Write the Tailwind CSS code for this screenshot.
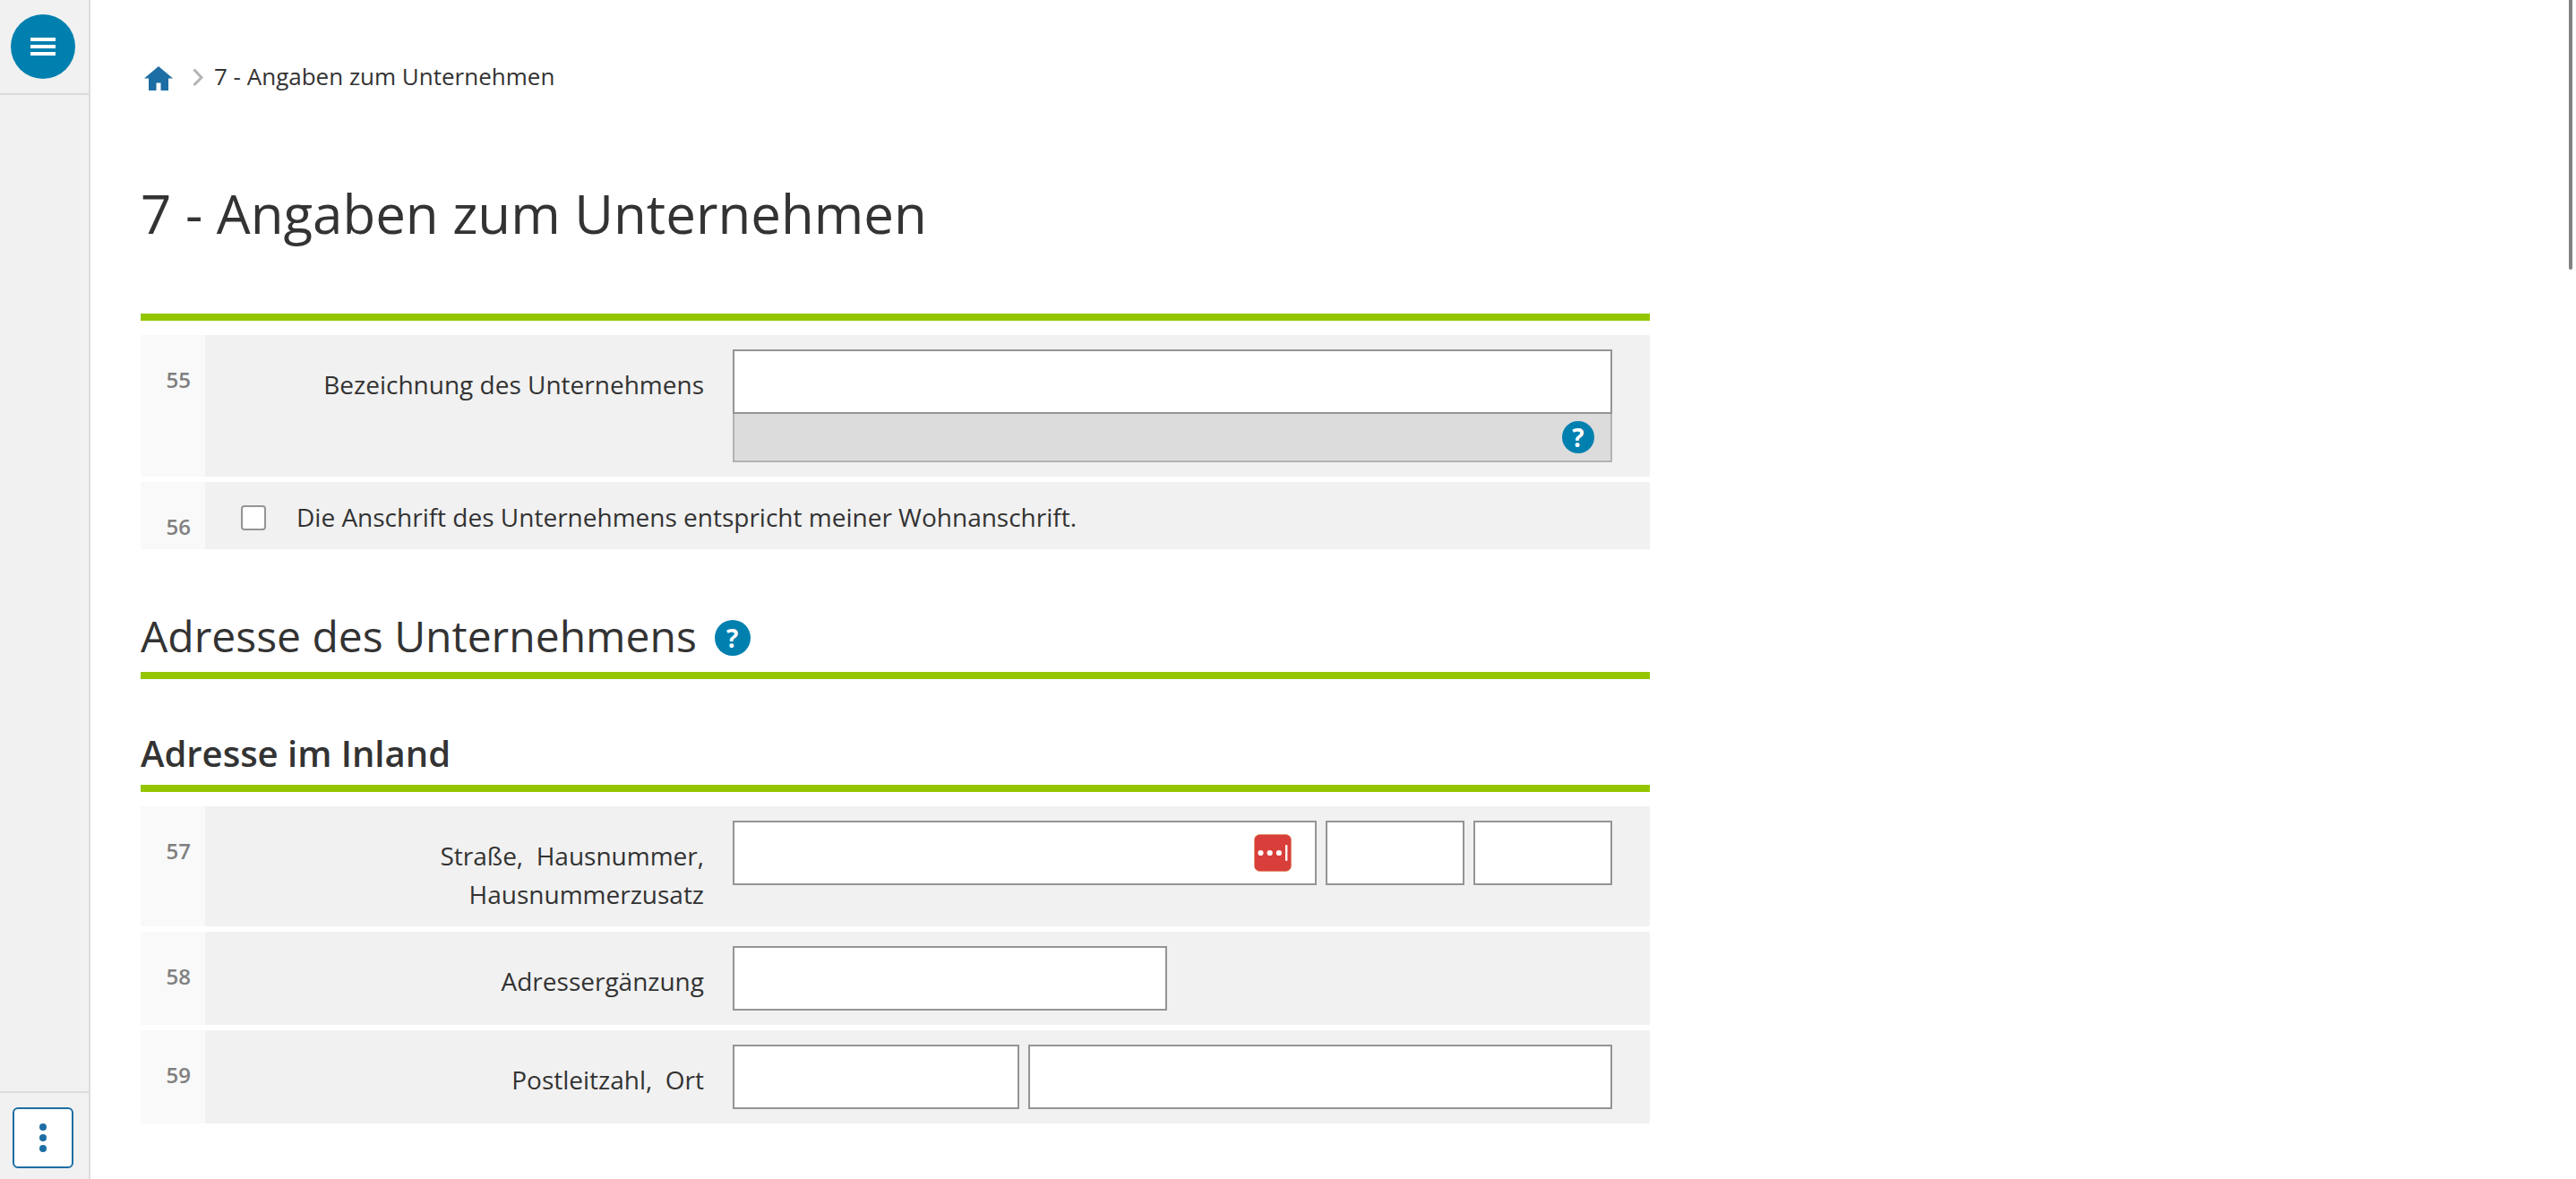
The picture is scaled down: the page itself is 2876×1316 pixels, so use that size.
<!DOCTYPE html>
<html lang="de">
<head>
  <meta charset="UTF-8" />
  <meta name="viewport" content="width=device-width, initial-scale=1.0" />
  <title>7 - Angaben zum Unternehmen</title>
  <script src="https://cdn.jsdelivr.net/npm/@tailwindcss/browser@4"></script>
</head>
<body class="flex min-h-screen bg-white font-['Open_Sans',sans-serif] text-[28px] leading-[43px] text-[#333]">

  <!-- Sidebar -->
  <aside class="flex w-[101px] shrink-0 flex-col justify-between border-r-2 border-[#dcdcdc] bg-[#f1f1f1]">
    <div class="border-b-2 border-[#dcdcdc] pt-4 pb-4 pl-3">
      <button type="button" aria-label="Menü" class="flex size-[72px] items-center justify-center rounded-full bg-[#0080af]">
        <svg class="h-5 w-7" viewBox="0 0 28 20" fill="#fff"><path d="M0 0h28v4H0zM0 8h28v4H0zM0 16h28v4H0z" /></svg>
      </button>
    </div>
    <div class="border-t-2 border-[#dcdcdc] pt-4 pb-3 pl-3.5">
      <button type="button" aria-label="Weitere Aktionen" class="flex size-[68px] items-center justify-center rounded-md border-2 border-[#1c6ea4] bg-white">
        <svg class="h-8 w-2" viewBox="0 0 8 32" fill="#1c6ea4"><circle cx="4" cy="4" r="4" /><circle cx="4" cy="16" r="4" /><circle cx="4" cy="28" r="4" /></svg>
      </button>
    </div>
  </aside>

  <!-- Main -->
  <main class="min-w-0 flex-1 px-14 pt-16">
    <div class="max-w-[1685px]">

      <nav aria-label="Breadcrumb" class="flex h-11 items-start text-[26px]">
        <a href="#" aria-label="Startseite" class="mt-2.5 ml-1">
          <svg class="h-7 w-8" viewBox="0 0 32 28" fill="#1c6ea4"><path d="M16 0 32 13.500H27V27H18.500V18.500H13.500V27H5V13.500H0z" /></svg>
        </a>
        <svg class="mt-3 ml-[22px] h-5 w-3" viewBox="0 0 12 20" fill="none" stroke="#b3b3b3" stroke-width="3"><path d="M1.500 1.500 10 10.500 1.500 19" /></svg>
        <span class="ml-3">7 - Angaben zum Unternehmen</span>
      </nav>

      <h1 class="mt-[88px] border-b-8 border-[#94c600] pb-[70px] text-[60px] leading-[84px]">7 - Angaben zum Unternehmen</h1>

      <form>
        <div class="mt-4 flex flex-col gap-1.5">
          <!-- 55 -->
          <div class="flex bg-[#f1f1f1]">
            <div class="w-[72px] shrink-0 bg-[#f9f9f9] pt-7 pr-4 text-right text-2xl leading-[43px] font-semibold text-[#808080]">55</div>
            <label for="bezeichnung" class="flex-1 pt-[34px] pr-8 pb-3.5 text-right">Bezeichnung des Unternehmens</label>
            <div class="mr-[42px] w-[982px] py-4">
              <input id="bezeichnung" type="text" class="block h-[72px] w-full border-2 border-[#949494] bg-white px-4" />
              <div class="flex h-[54px] items-center justify-end border-2 border-t-0 border-[#b3b3b3] bg-[#dcdcdc] pr-[18px]">
                <button type="button" aria-label="Hilfe" class="flex size-9 items-center justify-center rounded-full bg-[#0080af] text-[28px] font-bold text-white">?</button>
              </div>
            </div>
          </div>
          <!-- 56 -->
          <div class="flex bg-[#f1f1f1]">
            <div class="w-[72px] shrink-0 bg-[#f9f9f9] pt-7 pr-4 text-right text-2xl leading-[43px] font-semibold text-[#808080]">56</div>
            <div class="flex flex-1 items-start pt-[18px] pb-3.5 pl-10">
              <input id="anschrift" type="checkbox" class="mt-2 size-7 shrink-0 appearance-none rounded border-2 border-[#949494] bg-white checked:bg-[#0080af]" />
              <label for="anschrift" class="pl-[34px]">Die Anschrift des Unternehmens entspricht meiner Wohnanschrift.</label>
            </div>
          </div>
        </div>

        <div class="mt-16 flex items-end gap-5 border-b-8 border-[#94c600] pb-2">
          <h2 class="text-[48px] leading-[65px]">Adresse des Unternehmens</h2>
          <button type="button" aria-label="Hilfe" class="mb-2.5 flex size-10 items-center justify-center rounded-full bg-[#0080af] text-[28px] font-bold text-white">?</button>
        </div>

        <h3 class="mt-14 border-b-8 border-[#94c600] pb-2 text-[40px] leading-[54px] font-semibold">Adresse im Inland</h3>

        <div class="mt-4 flex flex-col gap-1.5">
          <!-- 57 -->
          <div class="flex bg-[#f1f1f1]">
            <div class="w-[72px] shrink-0 bg-[#f9f9f9] pt-7 pr-4 text-right text-2xl leading-[43px] font-semibold text-[#808080]">57</div>
            <div class="flex-1 pt-[34px] pr-8 pb-3.5 text-right">
              <label for="strasse">Straße,&nbsp;</label> <label for="hausnummer">Hausnummer,</label><br />
              <label for="zusatz">Hausnummerzusatz</label>
            </div>
            <div class="mr-[42px] flex w-[982px] items-start gap-2.5 py-4">
              <div class="relative flex-1">
                <input id="strasse" type="text" class="block h-[72px] w-full border-2 border-[#949494] bg-white px-4" />
                <button type="button" aria-label="Passwortmanager" class="absolute top-[15px] right-7">
                  <svg class="size-[42px]" viewBox="0 0 42 42">
                    <rect x=".5" y=".5" width="41" height="41" rx="6" fill="#d83f3b" stroke="#e08a55" stroke-width=".6" />
                    <g fill="#fff"><circle cx="7.500" cy="21" r="3.100" /><circle cx="17.700" cy="21" r="3.100" /><circle cx="27.900" cy="21" r="3.100" /><rect x="35" y="12" width="2.400" height="18" rx="1" /></g>
                  </svg>
                </button>
              </div>
              <input id="hausnummer" type="text" class="h-[72px] w-[155px] border-2 border-[#949494] bg-white px-4" />
              <input id="zusatz" type="text" class="h-[72px] w-[155px] border-2 border-[#949494] bg-white px-4" />
            </div>
          </div>
          <!-- 58 -->
          <div class="flex bg-[#f1f1f1]">
            <div class="w-[72px] shrink-0 bg-[#f9f9f9] pt-7 pr-4 text-right text-2xl leading-[43px] font-semibold text-[#808080]">58</div>
            <label for="ergaenzung" class="flex-1 pt-[34px] pr-8 pb-3.5 text-right">Adressergänzung</label>
            <div class="mr-[42px] w-[982px] py-4">
              <input id="ergaenzung" type="text" class="block h-[72px] w-[485px] border-2 border-[#949494] bg-white px-4" />
            </div>
          </div>
          <!-- 59 -->
          <div class="flex bg-[#f1f1f1]">
            <div class="w-[72px] shrink-0 bg-[#f9f9f9] pt-7 pr-4 text-right text-2xl leading-[43px] font-semibold text-[#808080]">59</div>
            <div class="flex-1 pt-[34px] pr-8 pb-3.5 text-right">
              <label for="plz">Postleitzahl,&nbsp;</label> <label for="ort">Ort</label>
            </div>
            <div class="mr-[42px] flex w-[982px] gap-2.5 py-4">
              <input id="plz" type="text" class="h-[72px] w-80 border-2 border-[#949494] bg-white px-4" />
              <input id="ort" type="text" class="h-[72px] min-w-0 flex-1 border-2 border-[#949494] bg-white px-4" />
            </div>
          </div>
        </div>
      </form>
    </div>
  </main>

  <!-- Scroll indicator -->
  <div class="fixed top-0 right-1 h-[301px] w-1 rounded-b-sm bg-[#808080]"></div>
</body>
</html>
